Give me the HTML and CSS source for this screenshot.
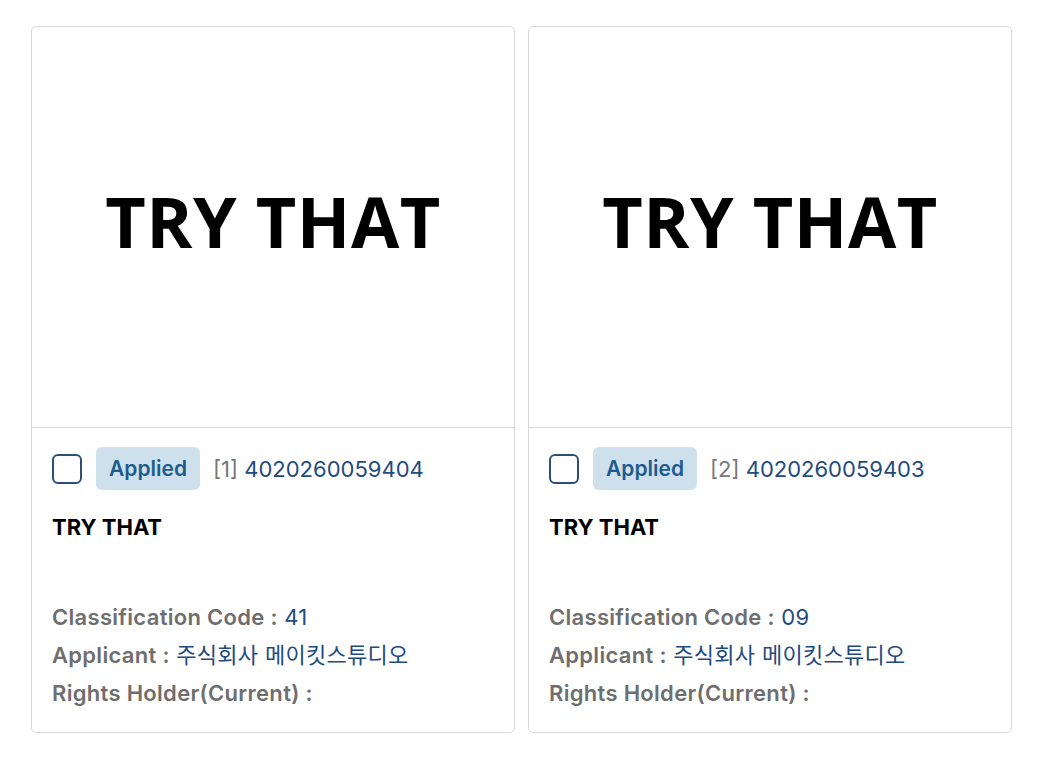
FILE: index.html
```html
<!DOCTYPE html>
<html lang="en">
<head>
<meta charset="utf-8">
<link rel="stylesheet" href="styles.css">
</head>
<body>
<div class="grid">
  <div class="card">
    <div class="thumb"><span class="mark">TRY THAT</span></div>
    <div class="info">
      <div class="head">
        <span class="check"></span>
        <span class="badge">Applied</span>
        <span class="num"><span class="idx">[1]</span> 4020260059404</span>
      </div>
      <div class="title">TRY THAT</div>
      <div class="meta">
        <div class="row"><span class="lbl">Classification Code :</span> <span class="val">41</span></div>
        <div class="row"><span class="lbl">Applicant :</span> <span class="val">주식회사 메이킷스튜디오</span></div>
        <div class="row"><span class="lbl">Rights Holder(Current) :</span></div>
      </div>
    </div>
  </div>
  <div class="card">
    <div class="thumb"><span class="mark">TRY THAT</span></div>
    <div class="info">
      <div class="head">
        <span class="check"></span>
        <span class="badge">Applied</span>
        <span class="num"><span class="idx">[2]</span> 4020260059403</span>
      </div>
      <div class="title">TRY THAT</div>
      <div class="meta">
        <div class="row"><span class="lbl">Classification Code :</span> <span class="val">09</span></div>
        <div class="row"><span class="lbl">Applicant :</span> <span class="val">주식회사 메이킷스튜디오</span></div>
        <div class="row"><span class="lbl">Rights Holder(Current) :</span></div>
      </div>
    </div>
  </div>
</div>
</body>
</html>
```
FILE: styles.css
```css
html, body { margin: 0; padding: 0; background: #fff; }
body {
  font-family: Inter, "Noto Sans CJK KR", sans-serif;
  color: #111;
}
.grid {
  display: grid;
  grid-template-columns: 484px 484px;
  gap: 13px;
  padding: 26px 0 0 31px;
}
.card {
  border: 1px solid #d9d9d9;
  border-radius: 5px;
  height: 707px;
  display: flex;
  flex-direction: column;
  box-sizing: border-box;
}
.thumb {
  height: 400px;
  border-bottom: 1px solid #d6d6d6;
  display: flex;
  align-items: center;
  justify-content: center;
}
.mark {
  font-family: "Open Sans", "Noto Sans", sans-serif;
  font-weight: 700;
  font-size: 70px;
  color: #000;
  letter-spacing: 0.5px;
  margin-top: -12px;
}
.info {
  padding: 19px 20px 0 20px;
}
.head {
  display: flex;
  align-items: center;
  height: 43px;
}
.check {
  width: 30px;
  height: 30px;
  box-sizing: border-box;
  border: 2px solid #2d4e78;
  border-radius: 6px;
  margin-right: 14px;
}
.badge {
  background: #cde0ec;
  color: #1d5b8c;
  font-weight: 600;
  font-size: 21px;
  height: 43px;
  line-height: 43px;
  padding: 0 13px;
  border-radius: 6px;
  margin-right: 13px;
}
.num {
  font-size: 22px;
  color: #1f4b80;
}
.idx { color: #777; }
.title {
  margin-top: 24px;
  font-weight: 700;
  font-size: 22px;
  line-height: 27px;
  color: #000;
}
.meta {
  margin-top: 57px;
}
.row {
  font-size: 22px;
  line-height: 38px;
  letter-spacing: 0.3px;
}
.lbl { color: #6e6e6e; font-weight: 600; }
.val { color: #1f4b80; }
```
